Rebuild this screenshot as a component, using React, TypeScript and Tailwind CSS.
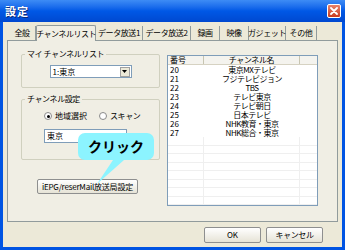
import React from "react";

const tabs = [
  { label: "全般", w: "w-[27px]" },
  { label: "チャンネルリスト", w: "w-[60px]", active: true },
  { label: "データ放送1", w: "w-[47px]" },
  { label: "データ放送2", w: "w-[48px]" },
  { label: "録画", w: "w-[29px]" },
  { label: "映像", w: "w-[29px]" },
  { label: "ガジェット", w: "w-[37px]" },
  { label: "その他", w: "w-[31px]" },
];

const channels = [
  { no: "20", name: "東京MXテレビ" },
  { no: "21", name: "フジテレビジョン" },
  { no: "22", name: "TBS" },
  { no: "23", name: "テレビ東京" },
  { no: "24", name: "テレビ朝日" },
  { no: "25", name: "日本テレビ" },
  { no: "26", name: "NHK教育・東京" },
  { no: "27", name: "NHK総合・東京" },
];

const GroupBox: React.FC<{ title: string; className?: string; children: React.ReactNode }> = ({
  title,
  className,
  children,
}) => (
  <div className={"relative border border-[#D0D0BF] rounded-[2px] " + (className ?? "")}>
    <span className="absolute -top-[7px] left-[3px] bg-[#F0EEE4] px-[2px] text-[8px] leading-[12px] tracking-[-0.4px] text-black whitespace-nowrap">
      {title}
    </span>
    {children}
  </div>
);

export default function App() {
  return (
    <div
      className="relative w-[345px] h-[250px] flex flex-col bg-[#0054E3] overflow-hidden"
      style={{ fontFamily: '"Noto Sans CJK JP", "Liberation Sans", sans-serif' }}
    >
      {/* Title bar */}
      <div className="h-[22px] flex items-center justify-between pl-[5px] pr-[4px] bg-gradient-to-b from-[#3D8CF5] via-[#0058E6] to-[#0048D0]">
        <span className="text-white font-bold text-[11px] leading-none tracking-[1px] [text-shadow:1px_1px_0_#0A2A7A]">
          設定
        </span>
        <div className="w-[14px] h-[14px] rounded-[2px] border border-white bg-gradient-to-b from-[#E8826A] to-[#C8391C] flex items-center justify-center">
          <svg width="8" height="8" viewBox="0 0 8 8">
            <path d="M1 1L7 7M7 1L1 7" stroke="white" strokeWidth="1.8" strokeLinecap="round" />
          </svg>
        </div>
      </div>

      {/* Body */}
      <div className="flex-1 mx-[3px] mb-[3px] bg-[#ECE9D8] flex flex-col px-[4px] pt-[2px]">
        {/* Tabs */}
        <div className="flex items-end h-[16px] pl-[2px] relative z-10">
          {tabs.map((t) =>
            t.active ? (
              <div
                key={t.label}
                className={`${t.w} h-[16px] -mb-[1px] flex items-center justify-center bg-[#F0EEE4] border border-b-0 border-[#919B9C] rounded-t-[2px] text-[8px] tracking-[-0.5px] whitespace-nowrap text-black`}
              >
                {t.label}
              </div>
            ) : (
              <div
                key={t.label}
                className={`${t.w} h-[14px] flex items-center justify-center border-r border-[#919B9C] text-[8px] tracking-[-0.4px] whitespace-nowrap text-black`}
              >
                {t.label}
              </div>
            )
          )}
        </div>

        {/* Panel */}
        <div className="h-[182px] border border-[#919B9C] bg-[#F0EEE4] flex pl-[13px] pt-[13px]">
          {/* Left column */}
          <div className="w-[139px] flex flex-col">
            <GroupBox title="マイ チャンネルリスト" className="h-[34px] flex justify-center pt-[10px]">
              <div className="w-[82px] h-[13px] bg-white border border-[#7F9DB9] flex items-center justify-between pl-[2px] pr-[1px]">
                <span className="text-[8px] leading-none">1:東京</span>
                <div className="w-[10px] h-[10px] bg-[#ECE9D8] border border-[#A0A0A0] flex items-center justify-center">
                  <svg width="5" height="3" viewBox="0 0 5 3">
                    <path d="M0 0H5L2.5 3Z" fill="black" />
                  </svg>
                </div>
              </div>
            </GroupBox>

            <GroupBox title="チャンネル設定" className="mt-[11px] h-[61px] flex flex-col pl-[22px] pt-[12px]">
              <div className="flex items-center text-[8px] leading-none whitespace-nowrap">
                <span className="w-[8px] h-[8px] rounded-full border border-[#8A8A8A] bg-white flex items-center justify-center">
                  <span className="w-[3px] h-[3px] rounded-full bg-black" />
                </span>
                <span className="ml-[3px]">地域選択</span>
                <span className="ml-[12px] w-[8px] h-[8px] rounded-full border border-[#8A8A8A] bg-white" />
                <span className="ml-[3px] tracking-[-0.4px]">スキャン</span>
              </div>
              <div className="mt-[9px] w-[83px] h-[14px] bg-white border border-[#7F9DB9] flex items-center pl-[2px] text-[8px] leading-none">
                東京
              </div>
            </GroupBox>

            <div className="relative mt-[19px] ml-[16px] w-[101px] h-[15px] bg-gradient-to-b from-[#FFFFFF] to-[#E6E3D6] border border-[#8E8F8F] rounded-[2px] flex items-center justify-center text-[8px] leading-none tracking-[-0.2px] whitespace-nowrap">
              iEPG/reserMail放送局設定
            </div>
          </div>

          {/* List view */}
          <div className="ml-[7px] mt-[1px] w-[151px] h-[151px] bg-white border border-[#7F9DB9] flex flex-col overflow-hidden">
            <div className="h-[13px] flex bg-[#F4F3EE] border-b border-[#D6D2C2] text-[8px] leading-none whitespace-nowrap">
              <div className="w-[36px] border-r border-[#C7C5B2] flex items-center pl-[2px]">番号</div>
              <div className="w-[96px] border-r border-[#C7C5B2] flex items-center justify-center tracking-[-0.4px]">
                チャンネル名
              </div>
              <div className="flex-1" />
            </div>
            <div className="flex-1">
              {channels.map((c) => (
                <div key={c.no} className="h-[9px] flex text-[8px] leading-[9px] whitespace-nowrap">
                  <div className="w-[36px] pl-[2px]">{c.no}</div>
                  <div className="w-[96px] text-center tracking-[-0.5px]">{c.name}</div>
                </div>
              ))}
              {Array.from({ length: 8 }).map((_, i) => (
                <div key={i} className="h-[8.5px] flex border-b border-[#EFEFEF]">
                  <div className="w-[36px] border-r border-[#EFEFEF]" />
                  <div className="w-[96px] border-r border-[#EFEFEF]" />
                </div>
              ))}
            </div>
          </div>
        </div>

        {/* Bottom buttons */}
        <div className="flex justify-end gap-[5px] pr-[15px] mt-[5px]">
          <div className="w-[57px] h-[16px] bg-gradient-to-b from-[#FFFFFF] to-[#E6E3D6] border border-[#8E8F8F] rounded-[2px] flex items-center justify-center text-[8px] leading-none">
            OK
          </div>
          <div className="w-[57px] h-[16px] bg-gradient-to-b from-[#FFFFFF] to-[#E6E3D6] border border-[#8E8F8F] rounded-[2px] flex items-center justify-center text-[8px] leading-none tracking-[-0.4px]">
            キャンセル
          </div>
        </div>
      </div>

      {/* Callout overlay */}
      <div className="absolute left-[78px] top-[133px] w-[76px] h-[27px]">
        <svg className="absolute left-0 top-0 overflow-visible" width="76" height="54" viewBox="0 0 76 54">
          <path
            d="M7 0H69A7 7 0 0 1 76 7V20A7 7 0 0 1 69 27H46L19 51L35 27H7A7 7 0 0 1 0 20V7A7 7 0 0 1 7 0Z"
            fill="#8CF4FF"
          />
        </svg>
        <span className="absolute inset-x-0 top-[5px] text-center text-[14px] leading-[16px] font-bold text-black">
          クリック
        </span>
      </div>
    </div>
  );
}
